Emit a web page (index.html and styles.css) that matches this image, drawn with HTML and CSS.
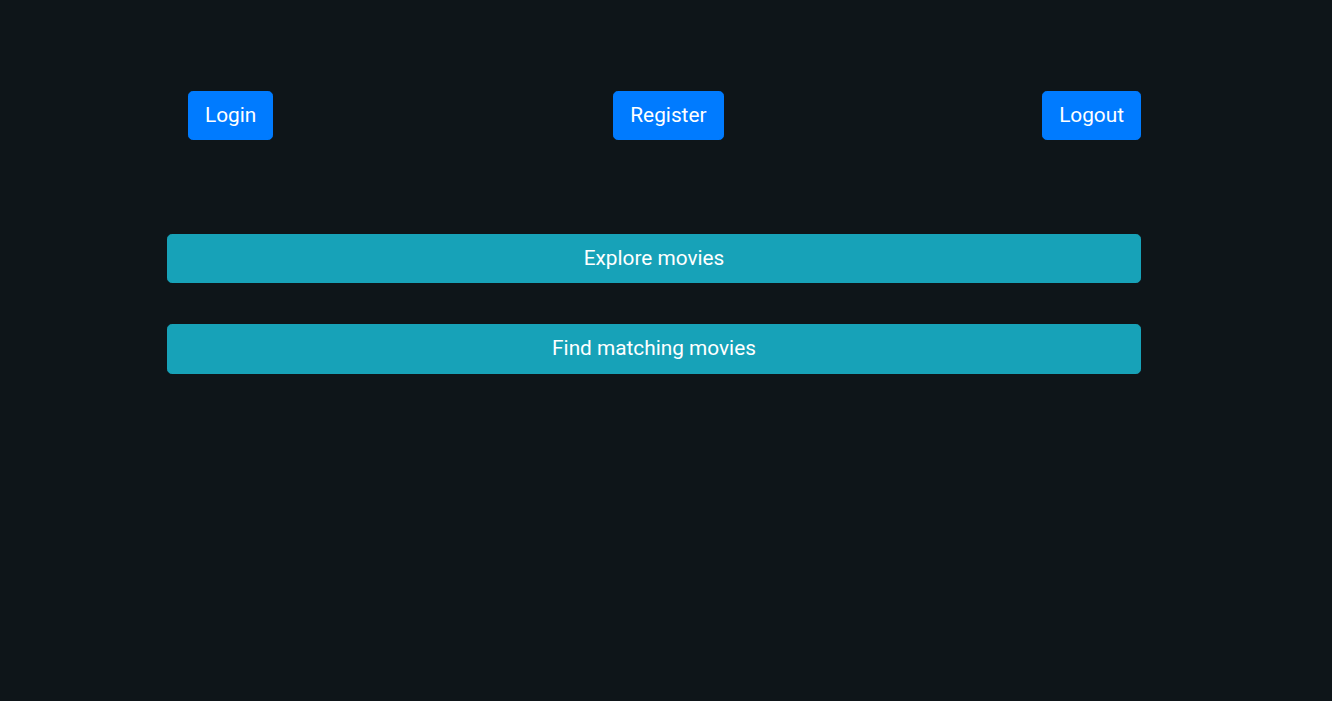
FILE: index.html
```html
<!DOCTYPE html>
<html>
<head>
<meta charset="utf-8">
<link rel="stylesheet" href="styles.css">
</head>
<body>
<main class="page">
  <nav class="auth-row">
    <button class="btn btn-primary">Login</button>
    <button class="btn btn-primary btn-register">Register</button>
    <button class="btn btn-primary btn-logout">Logout</button>
  </nav>
  <section class="actions">
    <button class="btn btn-info btn-block">Explore movies</button>
    <button class="btn btn-info btn-block">Find matching movies</button>
  </section>
</main>
</body>
</html>
```
FILE: styles.css
```css
html, body {
  margin: 0;
  padding: 0;
  height: 100%;
}
body {
  background: #0e1519;
  font-family: Roboto, "Liberation Sans", sans-serif;
}
.page {
  width: 974px;
  margin-left: 167px;
  padding-top: 91px;
}
.btn {
  font-family: inherit;
  font-size: 20.8px;
  line-height: 1.5;
  padding: 8px 16px;
  border: 1px solid transparent;
  border-radius: 4.8px;
  color: #fff;
  cursor: pointer;
  display: block;
}
.btn-primary {
  background: #007bff;
  border-color: #007bff;
}
.btn-info {
  background: #17a2b8;
  border-color: #17a2b8;
}
.auth-row {
  display: flex;
  padding-left: 21px;
}
.btn-register {
  margin-left: 340px;
}
.btn-logout {
  margin-left: auto;
}
.actions {
  display: flex;
  flex-direction: column;
  gap: 41px;
  margin-top: 94px;
}
.btn-block {
  width: 100%;
  text-align: center;
}
```
